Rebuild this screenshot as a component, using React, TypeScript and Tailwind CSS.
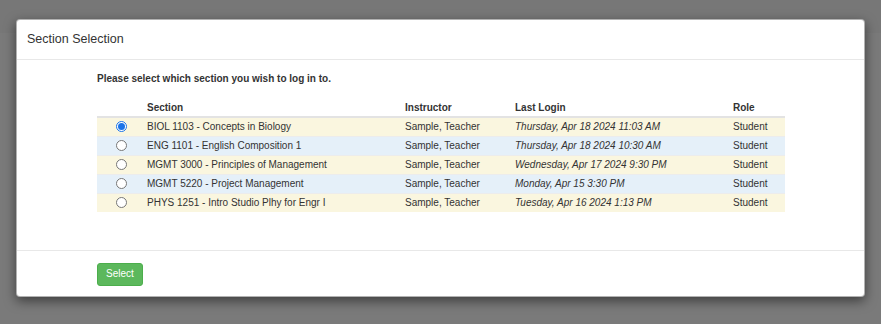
import React from "react";

const rows = [
  { section: "BIOL 1103 - Concepts in Biology", login: "Thursday, Apr 18 2024 11:03 AM", color: "bg-[#faf6df]", checked: true },
  { section: "ENG 1101 - English Composition 1", login: "Thursday, Apr 18 2024 10:30 AM", color: "bg-[#e5f0f9]", checked: false },
  { section: "MGMT 3000 - Principles of Management", login: "Wednesday, Apr 17 2024 9:30 PM", color: "bg-[#faf6df]", checked: false },
  { section: "MGMT 5220 - Project Management", login: "Monday, Apr 15 3:30 PM", color: "bg-[#e5f0f9]", checked: false },
  { section: "PHYS 1251 - Intro Studio Plhy for Engr I", login: "Tuesday, Apr 16 2024 1:13 PM", color: "bg-[#faf6df]", checked: false },
];

function Radio({ checked }: { checked: boolean }) {
  if (checked) {
    return (
      <span className="inline-flex w-[11px] h-[11px] rounded-full border border-[#1a73e8] bg-white items-center justify-center align-middle">
        <span className="w-[7px] h-[7px] rounded-full bg-[#1a73e8]" />
      </span>
    );
  }
  return <span className="inline-block w-[11px] h-[11px] rounded-full border border-[#777] bg-white align-middle" />;
}

export default function App() {
  return (
    <div
      className="w-[881px] h-[324px] bg-[#7a7a7a] relative overflow-hidden text-[#333]"
      style={{ fontFamily: '"Liberation Sans", Arial, sans-serif' }}
    >
      <div className="absolute left-0 right-0 top-0 h-[33px] bg-[#777777]" />
      <div className="absolute left-[16px] top-[19px] w-[849px] h-[278px] bg-white rounded-[4px] border border-black/30 shadow-[0_4px_12px_rgba(0,0,0,0.5)] flex flex-col">
        <div className="h-[40px] border-b border-[#e8e8e8] flex items-center pl-[10px]">
          <span className="text-[12.5px] leading-none">Section Selection</span>
        </div>
        <div className="flex-1 pl-[80px] pt-[13px]">
          <p className="text-[10px] font-bold leading-[11px]">Please select which section you wish to log in to.</p>
          <table className="mt-[15px] w-[688px] table-fixed border-collapse text-[10px]">
            <colgroup>
              <col className="w-[45px]" />
              <col className="w-[258px]" />
              <col className="w-[110px]" />
              <col className="w-[218px]" />
              <col className="w-[57px]" />
            </colgroup>
            <thead>
              <tr className="h-[18px] border-b-2 border-[#e3e3e3]">
                <th />
                <th className="text-left font-bold pl-[5px] align-middle">Section</th>
                <th className="text-left font-bold pl-[5px] align-middle">Instructor</th>
                <th className="text-left font-bold pl-[5px] align-middle">Last Login</th>
                <th className="text-left font-bold pl-[5px] align-middle">Role</th>
              </tr>
            </thead>
            <tbody>
              {rows.map((r, i) => (
                <tr key={i} className={`h-[19px] ${r.color} ${i > 0 ? "border-t border-[#ececec]" : ""}`}>
                  <td className="text-center pl-[4px] align-middle leading-none">
                    <Radio checked={r.checked} />
                  </td>
                  <td className="pl-[5px] align-middle whitespace-nowrap">{r.section}</td>
                  <td className="pl-[5px] align-middle whitespace-nowrap">Sample, Teacher</td>
                  <td className="pl-[5px] align-middle italic whitespace-nowrap">{r.login}</td>
                  <td className="pl-[5px] align-middle">Student</td>
                </tr>
              ))}
            </tbody>
          </table>
        </div>
        <div className="h-[46px] border-t border-[#e8e8e8] pl-[80px] pt-[9px]">
          <button className="w-[46px] h-[23px] bg-[#5cb85c] border border-[#4cae4c] rounded-[3px] text-white text-[10px] leading-none">
            Select
          </button>
        </div>
      </div>
    </div>
  );
}
